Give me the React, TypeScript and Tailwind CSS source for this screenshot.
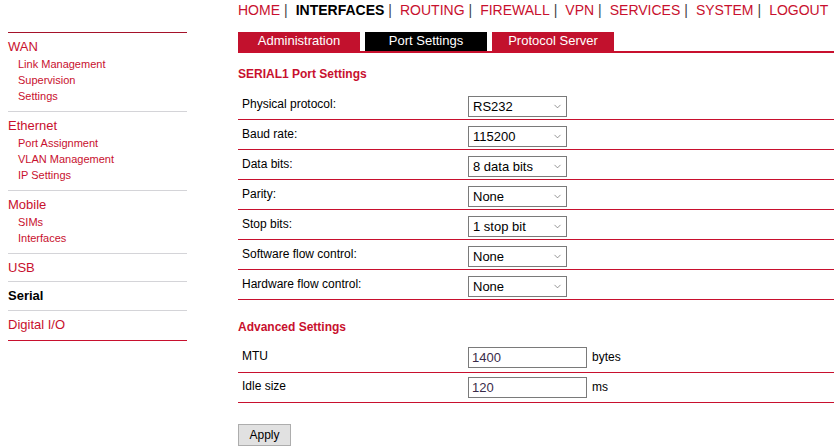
import { ChevronDown } from "lucide-react";

const RED = "text-[#c8102e]";

const nav = ["HOME", "INTERFACES", "ROUTING", "FIREWALL", "VPN", "SERVICES", "SYSTEM", "LOGOUT"];

const sidebar = [
  { title: "WAN", items: ["Link Management", "Supervision", "Settings"], pad: "pb-[7px]" },
  { title: "Ethernet", items: ["Port Assignment", "VLAN Management", "IP Settings"], pad: "pb-[7px]" },
  { title: "Mobile", items: ["SIMs", "Interfaces"], pad: "pb-[7px]" },
  { title: "USB", items: [], pad: "pb-[4px]" },
  { title: "Serial", items: [], pad: "pb-[5px]", active: true },
  { title: "Digital I/O", items: [], pad: "pb-[6px]" },
];

const portRows = [
  { label: "Physical protocol:", value: "RS232" },
  { label: "Baud rate:", value: "115200" },
  { label: "Data bits:", value: "8 data bits" },
  { label: "Parity:", value: "None" },
  { label: "Stop bits:", value: "1 stop bit" },
  { label: "Software flow control:", value: "None" },
  { label: "Hardware flow control:", value: "None" },
];

const advancedRows = [
  { label: "MTU", value: "1400", unit: "bytes" },
  { label: "Idle size", value: "120", unit: "ms" },
];

function FakeSelect({ value }: { value: string }) {
  return (
    <div className="flex h-[21px] w-[99px] items-center justify-between border border-[#7a7a7a] bg-white pl-[4px] pr-[3px] text-[13px] text-black">
      <span>{value}</span>
      <ChevronDown className="size-[11px] text-[#666]" strokeWidth={1.5} aria-hidden="true" />
    </div>
  );
}

export default function App() {
  return (
    <div className="flex h-[448px] w-[834px] overflow-hidden bg-white font-['Liberation_Sans',Arial,sans-serif]">
      <aside className="ml-[8px] mt-[32px] w-[179px] shrink-0 border-t border-[#a5122a]">
        {sidebar.map((section, i) => (
          <div
            key={section.title}
            className={`pt-[5px] ${section.pad} ${i > 0 ? "border-t border-[#d4d4d8]" : ""}`}
          >
            <div
              className={`text-[13px] leading-[18px] ${
                section.active ? "font-bold text-black" : RED
              }`}
            >
              {section.title}
            </div>
            {section.items.map((item) => (
              <div key={item} className={`pl-[10px] text-[11px] leading-[16px] ${RED}`}>
                {item}
              </div>
            ))}
          </div>
        ))}
        <div className="border-t border-[#c8102e]" />
      </aside>

      <main className="ml-[51px] flex-1">
        <nav className="flex h-[32px] pt-[2px] text-[14px] leading-[17px]">
          {nav.map((item, i) => (
            <span key={item} className="flex">
              <span className={item === "INTERFACES" ? "font-bold text-black" : RED}>{item}</span>
              {i < nav.length - 1 ? <span className="ml-[4px] mr-[8px] text-[#444]">|</span> : null}
            </span>
          ))}
        </nav>

        <div className="flex gap-[5px] border-b-2 border-[#c8102e]">
          <div className="flex h-[19px] w-[122px] items-center justify-center bg-[#c2112d] pb-[1px] text-[13px] text-white">
            Administration
          </div>
          <div className="flex h-[19px] w-[122px] items-center justify-center bg-black pb-[1px] text-[13px] text-white">
            Port Settings
          </div>
          <div className="flex h-[19px] w-[122px] items-center justify-center bg-[#c2112d] pb-[1px] text-[13px] text-white">
            Protocol Server
          </div>
        </div>

        <h2 className={`mt-[14px] text-[12px] font-bold leading-[14px] ${RED}`}>SERIAL1 Port Settings</h2>

        <div className="mt-[9px]">
          {portRows.map((row) => (
            <div key={row.label} className="flex h-[30px] border-b border-[#c8102e] pt-[6px]">
              <div className="w-[230px] pl-[4px] pt-[1px] text-[12px] leading-[14px] text-black">{row.label}</div>
              <FakeSelect value={row.value} />
            </div>
          ))}
        </div>

        <h2 className={`mt-[20px] text-[12px] font-bold leading-[14px] ${RED}`}>Advanced Settings</h2>

        <div className="mt-[9px]">
          {advancedRows.map((row) => (
            <div key={row.label} className="flex h-[30px] border-b border-[#c8102e] pt-[4px]">
              <div className="w-[230px] pl-[4px] pt-[2px] text-[12px] leading-[14px] text-black">{row.label}</div>
              <div className="flex h-[21px] w-[119px] items-center border border-[#7a7a7a] pl-[3px] text-[13px] text-[#3a2c4a]">
                {row.value}
              </div>
              <span className="ml-[5px] pt-[3px] text-[12px] leading-[14px] text-black">{row.unit}</span>
            </div>
          ))}
        </div>

        <button
          type="button"
          className="mt-[21px] h-[22px] w-[53px] border border-[#adadad] bg-[#e1e1e1] text-[12px] text-black"
        >
          Apply
        </button>
      </main>
    </div>
  );
}
